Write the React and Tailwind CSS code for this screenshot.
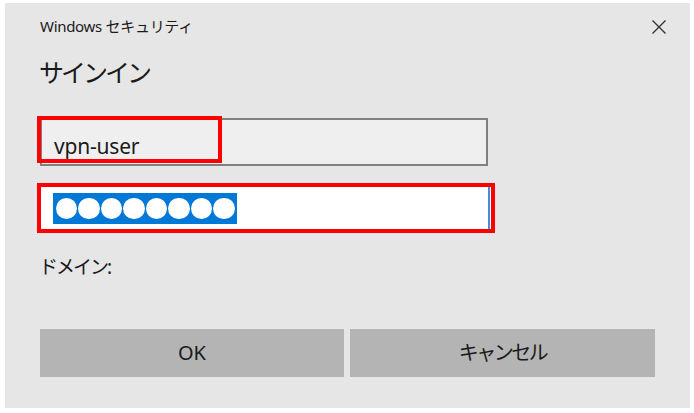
import React from "react";

export default function App() {
  const font = { fontFamily: '"Noto Sans", "Noto Sans CJK JP", sans-serif' };
  return (
    <div className="w-[694px] h-[413px] bg-white pl-[5px] pt-[3px]" style={font}>
      <div className="w-[685px] h-[405px] bg-[#e6e6e6] flex flex-col text-[#1a1a1a]">
        <div className="flex justify-between items-center pl-[35px] pr-[23px] pt-[13px] h-[33px]">
          <span className="text-[15px] leading-[20px] tracking-[-0.3px]">Windows セキュリティ</span>
          <svg width="16" height="16" viewBox="0 0 16 16" className="mt-[2px]">
            <path d="M1.5 1.5 L14.5 14.5 M14.5 1.5 L1.5 14.5" stroke="#333" strokeWidth="1.4" fill="none" />
          </svg>
        </div>
        <div className="pl-[34px] mt-[20px] text-[25px] leading-[32px] tracking-[-3px]">サインイン</div>

        <div className="relative ml-[35px] mt-[30px] w-[448px] h-[48px] bg-[#efefef] border-2 border-[#808080] flex items-center">
          <span className="pl-[12px] pt-[8px] text-[21px] leading-[24px] tracking-[-0.2px]">vpn-user</span>
          <div className="absolute left-[-5px] top-[-4px] w-[185px] h-[47px] border-4 border-[#ff0000]"></div>
        </div>

        <div className="ml-[32px] mt-[17px] w-[458px] h-[50px] border-4 border-[#ff0000] bg-white flex items-center justify-between">
          <div className="ml-[12px] mt-[1px] h-[31px] w-[184px] bg-[#0078d7] flex items-center justify-center">
            {Array.from({ length: 8 }).map((_, i) => (
              <div key={i} className="w-[21.5px] h-[21.5px] rounded-full bg-white mx-[0.5px]"></div>
            ))}
          </div>
          <div className="h-full w-[2px] bg-[#3b8fdc] mr-[1px]"></div>
        </div>

        <div className="pl-[34px] mt-[22px] text-[19px] leading-[24px] tracking-[-2px]">ドメイン:</div>

        <div className="flex ml-[35px] mt-[50px] gap-[6px]">
          <div className="w-[304px] h-[48px] bg-[#b4b4b4] flex items-center justify-center text-[20px]">OK</div>
          <div className="w-[305px] h-[48px] bg-[#b4b4b4] flex items-center justify-center text-[20px] tracking-[-2.5px]">キャンセル</div>
        </div>
      </div>
    </div>
  );
}
